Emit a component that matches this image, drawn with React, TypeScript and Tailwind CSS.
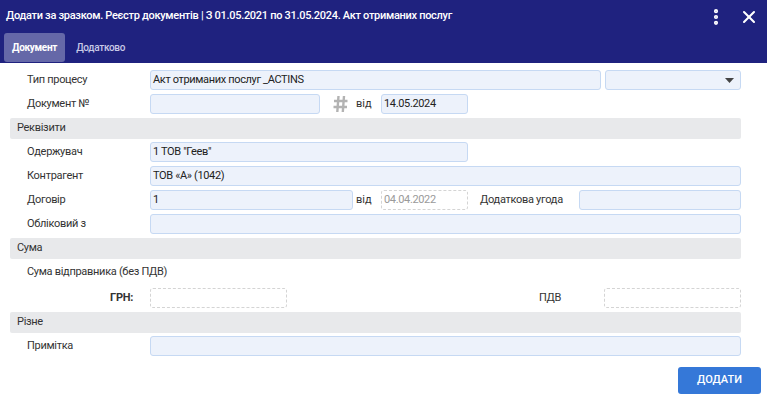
import { MoreVertical, X } from "lucide-react";

const input =
  "h-5 rounded-[3px] border border-[#c6d9f3] bg-[#edf2fb] px-[2px] text-[11px] tracking-[-0.35px] leading-[18px] text-[#222]";
const dashed =
  "h-5 rounded-[3px] border border-dashed border-[#d4d4d4] bg-white px-[2px] text-[11px] tracking-[-0.35px] leading-[18px] text-[#9a9a9a]";

function Section({ title }: { title: string }) {
  return (
    <div className="flex h-[21px] items-center rounded-[2px] bg-[#e8e9eb] pl-[7px] text-[11px] tracking-[-0.3px] text-[#333]">
      {title}
    </div>
  );
}

function Label({ children }: { children: React.ReactNode }) {
  return (
    <div className="w-[140px] shrink-0 whitespace-nowrap pl-[17px] text-[11px] tracking-[-0.3px] text-[#333]">
      {children}
    </div>
  );
}

function HashIcon() {
  return (
    <svg width="15" height="18" viewBox="0 0 15 18" className="text-[#b3b3b3]">
      <path d="M5.5 1 L4.3 17 M11 1 L9.8 17 M1 6 H14.5 M0.5 12 H14" stroke="currentColor" strokeWidth="2.4" fill="none" />
    </svg>
  );
}

export default function App() {
  return (
    <div className="flex h-[398px] w-[767px] flex-col bg-white font-['Roboto',sans-serif]">
      {/* Header */}
      <div className="bg-[#1f227f]">
        <div className="flex h-[33px] items-center pl-[6px] pr-[8px]">
          <span className="flex-1 text-[11px] font-medium tracking-[-0.3px] text-white">
            Додати за зразком. Реєстр документів | З 01.05.2021 по 31.05.2024. Акт отриманих послуг
          </span>
          <MoreVertical className="h-5 w-5 text-white" strokeWidth={3} />
          <X className="ml-[13px] h-5 w-5 text-white" strokeWidth={2.5} />
        </div>
        <div className="flex h-[30px] items-start pl-[4px]">
          <div className="flex h-[29px] items-center rounded-[3px] bg-[#6568a8] px-[8px] text-[10px] font-bold tracking-[-0.3px] text-white">
            Документ
          </div>
          <div className="flex h-[29px] items-center px-[11px] text-[10px] font-medium tracking-[-0.3px] text-[#c8c9e6]">
            Додатково
          </div>
        </div>
      </div>

      {/* Body */}
      <div className="flex flex-col pl-[10px] pr-[26px] pt-[7px]">
        <div className="flex items-center">
          <Label>Тип процесу</Label>
          <div className={`${input} w-[451px]`}>Акт отриманих послуг _ACTINS</div>
          <div className={`${input} ml-[4px] flex flex-1 items-center justify-end pr-[6px]`}>
            <svg width="9" height="5" viewBox="0 0 9 5">
              <path d="M0 0 H9 L4.5 5 Z" fill="#444" />
            </svg>
          </div>
        </div>

        <div className="mt-[4px] flex items-center">
          <Label>Документ №</Label>
          <div className={`${input} w-[170px]`} />
          <div className="ml-[13px] flex items-center">
            <HashIcon />
          </div>
          <span className="ml-[8px] w-[25px] text-[11px] text-[#333]">від</span>
          <div className={`${input} w-[87px]`}>14.05.2024</div>
        </div>

        <div className="mt-[4px]">
          <Section title="Реквізити" />
        </div>

        <div className="mt-[3px] flex items-center">
          <Label>Одержувач</Label>
          <div className={`${input} w-[318px]`}>1 ТОВ "Геев"</div>
        </div>

        <div className="mt-[4px] flex items-center">
          <Label>Контрагент</Label>
          <div className={`${input} flex-1`}>ТОВ «А» (1042)</div>
        </div>

        <div className="mt-[4px] flex items-center">
          <Label>Договір</Label>
          <div className={`${input} w-[203px]`}>1</div>
          <span className="ml-[3px] w-[25px] text-[11px] text-[#333]">від</span>
          <div className={`${dashed} w-[87px]`}>04.04.2022</div>
          <span className="ml-[12px] w-[99px] text-[11px] tracking-[-0.3px] text-[#333]">Додаткова угода</span>
          <div className={`${input} flex-1`} />
        </div>

        <div className="mt-[4px] flex items-center">
          <Label>Обліковий з</Label>
          <div className={`${input} flex-1`} />
        </div>

        <div className="mt-[4px]">
          <Section title="Сума" />
        </div>

        <div className="mt-[2px] flex h-[22px] items-center">
          <Label>Сума відправника (без ПДВ)</Label>
        </div>

        <div className="mt-[5px] flex items-center">
          <div className="w-[123px] shrink-0 text-right text-[11px] font-bold tracking-[-0.3px] text-[#333]">ГРН:</div>
          <div className="w-[17px] shrink-0" />
          <div className={`${dashed} w-[137px]`} />
          <div className="flex-1 pr-[43px] text-right text-[11px] tracking-[-0.3px] text-[#333]">ПДВ</div>
          <div className={`${dashed} w-[137px]`} />
        </div>

        <div className="mt-[4px]">
          <Section title="Різне" />
        </div>

        <div className="mt-[3px] flex items-center">
          <Label>Примітка</Label>
          <div className={`${input} flex-1`} />
        </div>
      </div>

      <div className="mt-[11px] flex justify-end pr-[6px]">
        <button className="h-[27px] w-[83px] rounded-[3px] bg-[#3578d8] text-[11px] font-medium text-white">
          ДОДАТИ
        </button>
      </div>
    </div>
  );
}
